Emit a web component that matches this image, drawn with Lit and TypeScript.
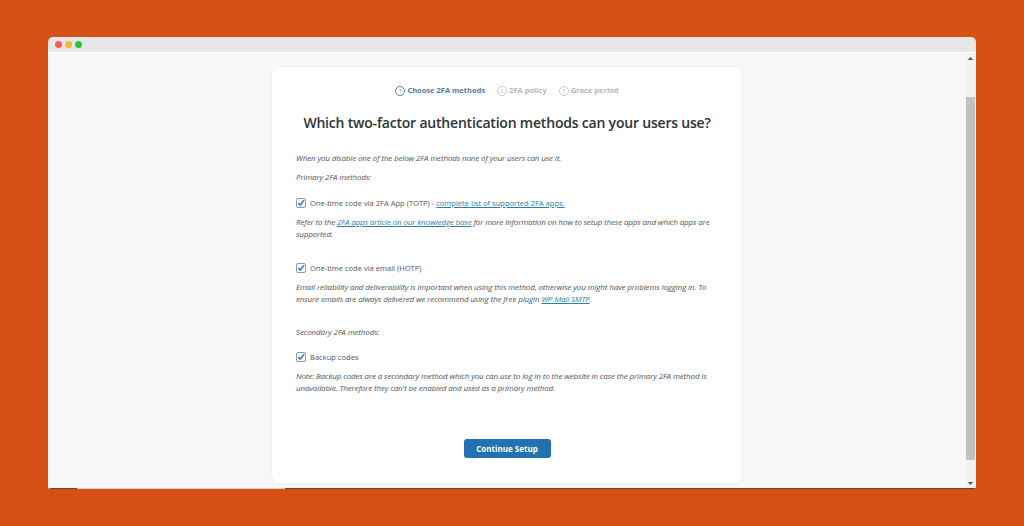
import { LitElement, html, css } from "lit";
import { customElement } from "lit/decorators.js";

@customElement("app-root")
export class AppRoot extends LitElement {
  static styles = css`
    :host { display: block; width: 1024px; height: 526px; background: #d64f14; overflow: hidden; font-family: "Open Sans", sans-serif; padding: 37px 48px 0; box-sizing: border-box; }
    .win { width: 928px; height: 452px; border-radius: 5px 5px 2px 2px; overflow: hidden; display: flex; flex-direction: column; }
    .bar { height: 15px; background: #e7e7e7; border-bottom: 1px solid #fff; display: flex; align-items: center; gap: 3px; padding-left: 7px; flex: none; }
    .dot { width: 7px; height: 7px; border-radius: 50%; }
    .body { flex: 1; display: flex; min-height: 0; background: #f6f7f9; }
    .main { flex: 1; display: flex; justify-content: center; padding: 14px 0 0; min-width: 0; }
    .card { width: 470px; height: 416px; background: #fff; border-radius: 8px; box-shadow: 0 0 3px rgba(0,0,0,.06); box-sizing: border-box; padding: 17px 24px 0; display: flex; flex-direction: column; }
    .steps { display: flex; justify-content: center; gap: 12px; height: 13px; font-size: 7.5px; font-weight: 700; color: #b4b9be; line-height: 13px; }
    .step { display: flex; align-items: center; gap: 2px; }
    .step.on { color: #4d7f9e; }
    .num { width: 10px; height: 10px; box-sizing: border-box; border: 1px solid #c5c9cd; border-radius: 50%; font-size: 5.5px; line-height: 8px; font-weight: 400; display: flex; align-items: center; justify-content: center; }
    .step.on .num { border-color: #4d86a8; }
    h1 { margin: 15px 0 0; font-size: 14px; letter-spacing: -0.2px; line-height: 22px; font-weight: 600; color: #2c3338; text-align: center; white-space: nowrap; }
    p { margin: 0; font-size: 8px; letter-spacing: -0.14px; line-height: 12px; font-style: italic; color: #50545a; }
    a { color: #2e7da6; text-decoration: underline; }
    .lead { margin-top: 18px; }
    .sec { margin-top: 7px; }
    .opt { display: flex; align-items: center; gap: 4px; font-size: 7.55px; line-height: 12px; color: #50575e; }
    .cb { width: 10px; height: 10px; box-sizing: border-box; border: 1px solid #8c9aa6; border-radius: 2px; background: #fcfcfd; display: flex; flex: none; align-items: center; justify-content: center; }
    .cb svg { width: 8px; height: 8px; display: block; flex: none; }
    .o1 { margin-top: 14px; }
    .d1 { margin-top: 7px; }
    .o2 { margin-top: 22px; }
    .s2 { margin-top: 21px; }
    .o3 { margin-top: 13px; }
    .foot { display: flex; justify-content: center; margin-top: 45px; }
    .btn { width: 87px; height: 19px; border-radius: 3px; background: #2271b1; color: #fff; font-size: 8px; font-weight: 700; display: flex; align-items: center; justify-content: center; }
    .sb { width: 9px; margin-right: 1px; background: #f1f1f1; display: flex; flex-direction: column; align-items: center; flex: none; }
    .arrow { height: 10px; flex: none; display: flex; align-items: center; justify-content: center; }
    .arrow svg { width: 5px; height: 3px; display: block; }
    .track { flex: 1; display: flex; flex-direction: column; width: 100%; }
    .thumb { width: 100%; height: 363px; margin-top: 34px; background: #c1c1c1; }
    .edge { height: 1px; flex: none; display: flex; background: #d0d0d0; }
    .edge span { background: #5b4a40; }
    .e1 { width: 27px; margin-left: 2px; }
    .e2 { flex: 1; margin-left: 208px; }
  `;

  private cb() {
    return html`<span class="cb"><svg viewBox="0 0 8 8"><path d="M1.2 4 3.2 6.1 6.9 1.4" fill="none" stroke="#2271b1" stroke-width="1.5"/></svg></span>`;
  }

  render() {
    return html`
      <div class="win">
        <div class="bar">
          <span class="dot" style="background:#fc5b57"></span>
          <span class="dot" style="background:#fdb728"></span>
          <span class="dot" style="background:#27c840"></span>
        </div>
        <div class="body">
          <div class="main">
            <div class="card">
              <div class="steps">
                <span class="step on"><span class="num">1</span>Choose 2FA methods</span>
                <span class="step"><span class="num">2</span>2FA policy</span>
                <span class="step"><span class="num">3</span>Grace period</span>
              </div>
              <h1>Which two-factor authentication methods can your users use?</h1>
              <p class="lead">When you disable one of the below 2FA methods none of your users can use it.</p>
              <p class="sec">Primary 2FA methods:</p>
              <div class="opt o1">${this.cb()}<span>One-time code via 2FA App (TOTP) - <a>complete list of supported 2FA apps.</a></span></div>
              <p class="d1">Refer to the <a>2FA apps article on our knowledge base</a> for more information on how to setup these apps and which apps are supported.</p>
              <div class="opt o2">${this.cb()}<span>One-time code via email (HOTP)</span></div>
              <p class="d1">Email reliability and deliverability is important when using this method, otherwise you might have problems logging in. To ensure emails are always delivered we recommend using the free plugin <a>WP Mail SMTP</a>.</p>
              <p class="s2">Secondary 2FA methods:</p>
              <div class="opt o3">${this.cb()}<span>Backup codes</span></div>
              <p class="d1">Note: Backup codes are a secondary method which you can use to log in to the website in case the primary 2FA method is unavailable. Therefore they can't be enabled and used as a primary method.</p>
              <div class="foot"><span class="btn">Continue Setup</span></div>
            </div>
          </div>
          <div class="sb">
            <span class="arrow"><svg viewBox="0 0 5 3"><path d="M2.5 0 5 3H0z" fill="#505050"/></svg></span>
            <div class="track"><div class="thumb"></div></div>
            <span class="arrow"><svg viewBox="0 0 5 3"><path d="M0 0H5L2.5 3z" fill="#505050"/></svg></span>
          </div>
        </div>
        <div class="edge"><span class="e1"></span><span class="e2"></span></div>
      </div>
    `;
  }
}
